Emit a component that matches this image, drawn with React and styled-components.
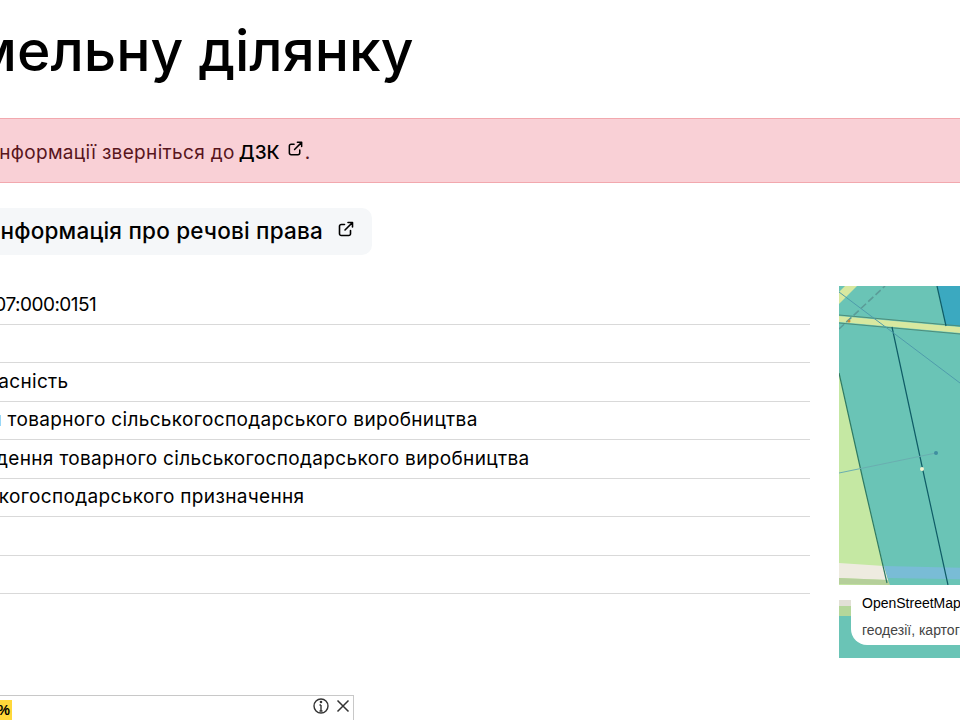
import React from "react";
import styled, { createGlobalStyle } from "styled-components";

const Global = createGlobalStyle`
  html, body { margin: 0; width: 960px; height: 720px; overflow: hidden; background: #fff; }
  body { font-family: "Inter", "Liberation Sans", sans-serif; color: #000; }
`;

const Page = styled.main`
  width: 1500px;
  margin-left: -500px;
  padding-top: 19px;
  box-sizing: border-box;
  position: relative;
  height: 720px;
`;
const Title = styled.h1`
  margin: 0 0 36px 403px;
  font-size: 57px;
  line-height: 63px;
  font-weight: 550;
  white-space: nowrap;
`;
const Alert = styled.div`
  box-sizing: border-box;
  height: 65px;
  padding: 3px 0 0 239px;
  display: flex;
  align-items: center;
  background: #f9d0d6;
  border: 1px solid #f2a8ae;
  color: #58151c;
  font-size: 19px;
  letter-spacing: 0.34px;
  white-space: nowrap;
`;
const AlertLink = styled.a`
  color: #000;
  font-weight: 500;
  letter-spacing: 0;
  margin-left: 4px;
`;
const AlertIcon = styled.span`
  display: inline-flex;
  margin: 0 1px 8px 7px;
`;
const ActionWrap = styled.div`
  width: 872px;
  margin: 25px 0 31px;
  display: flex;
  justify-content: flex-end;
`;
const Action = styled.a`
  display: inline-flex;
  align-items: center;
  gap: 14px;
  height: 47px;
  padding: 0 17px 2px 16px;
  box-sizing: border-box;
  border-radius: 10px;
  background: #f5f7f9;
  font-size: 22.5px;
  font-weight: 500;
  letter-spacing: 0.2px;
  color: #000;
  white-space: nowrap;
`;
const ActionIcon = styled.span`
  display: inline-flex;
  margin-bottom: 4px;
`;
const Details = styled.section`
  display: grid;
  grid-template-columns: 1310px 300px;
  column-gap: 29px;
  align-items: start;
`;
const List = styled.div`
  display: flex;
  flex-direction: column;
`;
const Row = styled.div`
  display: grid;
  grid-template-columns: 378px 1fr;
  height: 38.5px;
  box-sizing: border-box;
  padding-bottom: 1px;
  align-items: center;
  border-bottom: 1px solid #d9d9d9;
  font-size: 19px;
  letter-spacing: 0.34px;
  white-space: nowrap;
`;
const Label = styled.span`
  font-weight: 500;
`;
const Value = styled.span`
  letter-spacing: ${(p) => (p.$tight ? "-0.52px" : "inherit")};
`;
const MapBox = styled.div`
  position: relative;
  height: 372px;
  width: 300px;
  overflow: hidden;
  background: #6ac4b6;
`;
const MapArt = styled.svg`
  display: block;
`;
const MapCard = styled.div`
  position: absolute;
  left: 12px;
  top: 299px;
  width: 320px;
  height: 60px;
  box-sizing: border-box;
  padding: 9px 11px;
  background: #fff;
  border-radius: 0 0 16px 16px;
  font-family: "Liberation Sans", Arial, sans-serif;
  font-size: 14px;
  white-space: nowrap;
`;
const CardTitle = styled.div`
  color: #000;
  line-height: 18px;
`;
const CardText = styled.div`
  color: #444;
  margin-top: 9px;
  line-height: 18px;
`;
const Ad = styled.aside`
  position: absolute;
  left: 400px;
  top: 695px;
  width: 454px;
  height: 40px;
  box-sizing: border-box;
  border: 1px solid #c8c8c8;
  background: #fff;
`;
const Badge = styled.span`
  position: absolute;
  right: 341px;
  top: 4px;
  width: 20px;
  height: 21px;
  padding-right: 2px;
  box-sizing: border-box;
  background: #ffd83a;
  font: 700 14px/21px "Liberation Sans", sans-serif;
  text-align: right;
`;
const AdIcons = styled.div`
  position: absolute;
  right: 2px;
  top: 1px;
  display: flex;
  align-items: center;
  gap: 5px;
`;

const Ext = ({ size = 18 }) => (
  <svg width={size} height={size} viewBox="0 0 18 18" fill="none" stroke="#000" strokeWidth="1.6" strokeLinecap="round" strokeLinejoin="round" style={{ flex: "none" }}>
    <path d="M13.5 10.5v3.2a1.8 1.8 0 0 1-1.8 1.8H4.3a1.8 1.8 0 0 1-1.8-1.8V6.3a1.8 1.8 0 0 1 1.8-1.8h3.2" />
    <path d="M11 2.5h4.5V7M15.5 2.5 8 10" />
  </svg>
);

const rows = [
  ["Кадастровий номер", "3220887600:07:000:0151", true],
  ["Область", "Київська"],
  ["Форма власності", "Приватна власність"],
  ["Цільове призначення", "Для ведення товарного сільськогосподарського виробництва"],
  ["Код КВЦПЗ", "01.01 Для ведення товарного сільськогосподарського виробництва"],
  ["Категорія земель", "Землі сільськогосподарського призначення"],
  ["Площа", "2,4817 га"],
  ["Оцінка", "125 430 грн"],
];

const MapSvg = () => (
  <MapArt width="300" height="372" viewBox="839 286 300 372">
    <rect x="839" y="286" width="300" height="372" fill="#6ac4b6" />
    <polygon points="937,286 1139,286 1139,330 946,326" fill="#3ba9c0" />
    <polygon points="839,372 863,480 888,585 839,585" fill="#c5e8a3" />
    <polygon points="839,563 884,566 888,580 839,578" fill="#eeebe0" />
    <polygon points="839,578 888,580 890,585 839,584" fill="#b5cf9a" />
    <polygon points="884,566 1139,572 1139,582 888,578" fill="#79bcd6" />
    <polygon points="839,585 1139,585 1139,600 839,600" fill="#fff" />
    <polygon points="839,600 851,600 851,606 839,606" fill="#e2e0d6" />
    <polygon points="839,606 851,606 851,616 839,616" fill="#b5d79a" />
    <polygon points="839,304 857,286 845,286 839,292" fill="#d8e8a0" />
    <polygon points="839,316 960,327 960,333 839,322" fill="#d8e8a0" />
    <path d="M839 323 960 334M839 315 960 326" stroke="#4d8d7a" strokeWidth="1" fill="none" />
    <path d="M892 327 925 480 948 585" stroke="#0f5c66" strokeWidth="1.2" fill="none" />
    <path d="M839 373 863 480 887 583" stroke="#2f7a64" strokeWidth="1.2" fill="none" />
    <path d="M937 286 946 326" stroke="#0f5c66" strokeWidth="1.2" fill="none" />
    <path d="M839 292 960 383" stroke="#4f9cab" strokeWidth="1" fill="none" />
    <path d="M839 473 936 453" stroke="#6aaeb0" strokeWidth="1" fill="none" />
    <path d="M839 329 885 286" stroke="#5b9c98" strokeWidth="1.6" strokeDasharray="7 3" fill="none" />
    <circle cx="936" cy="453" r="2" fill="#3f8ea0" />
    <circle cx="922" cy="469" r="2" fill="#f3f3d0" />
    <circle cx="849" cy="321" r="1.5" fill="#c78a3a" />
  </MapArt>
);

export default function App() {
  return (
    <>
      <Global />
      <Page>
        <Title>Земельну ділянку</Title>
        <Alert>
          Для отримання детальної інформації зверніться до
          <AlertLink>ДЗК</AlertLink>
          <AlertIcon><Ext size={17} /></AlertIcon>.
        </Alert>
        <ActionWrap>
          <Action>
            Повна інформація про речові права
            <ActionIcon><Ext /></ActionIcon>
          </Action>
        </ActionWrap>
        <Details>
          <List>
            {rows.map(([k, v, tight]) => (
              <Row key={k}>
                <Label>{k}</Label>
                <Value $tight={tight}>{v}</Value>
              </Row>
            ))}
          </List>
          <MapBox>
            <MapSvg />
            <MapCard>
              <CardTitle>OpenStreetMap Україна</CardTitle>
              <CardText>геодезії, картографії</CardText>
            </MapCard>
          </MapBox>
        </Details>
        <Ad>
          <Badge>%</Badge>
          <AdIcons>
            <svg width="18" height="18" viewBox="0 0 18 18" fill="none" stroke="#333" strokeWidth="1.4"><circle cx="9" cy="9" r="7" /><path d="M9 8v6M7.5 8H9M7.5 14h3" /><circle cx="9" cy="5" r=".6" /></svg>
            <svg width="16" height="16" viewBox="0 0 16 16" fill="none" stroke="#333" strokeWidth="1.5"><path d="M2.5 2.5l11 11M13.5 2.5l-11 11" /></svg>
          </AdIcons>
        </Ad>
      </Page>
    </>
  );
}
